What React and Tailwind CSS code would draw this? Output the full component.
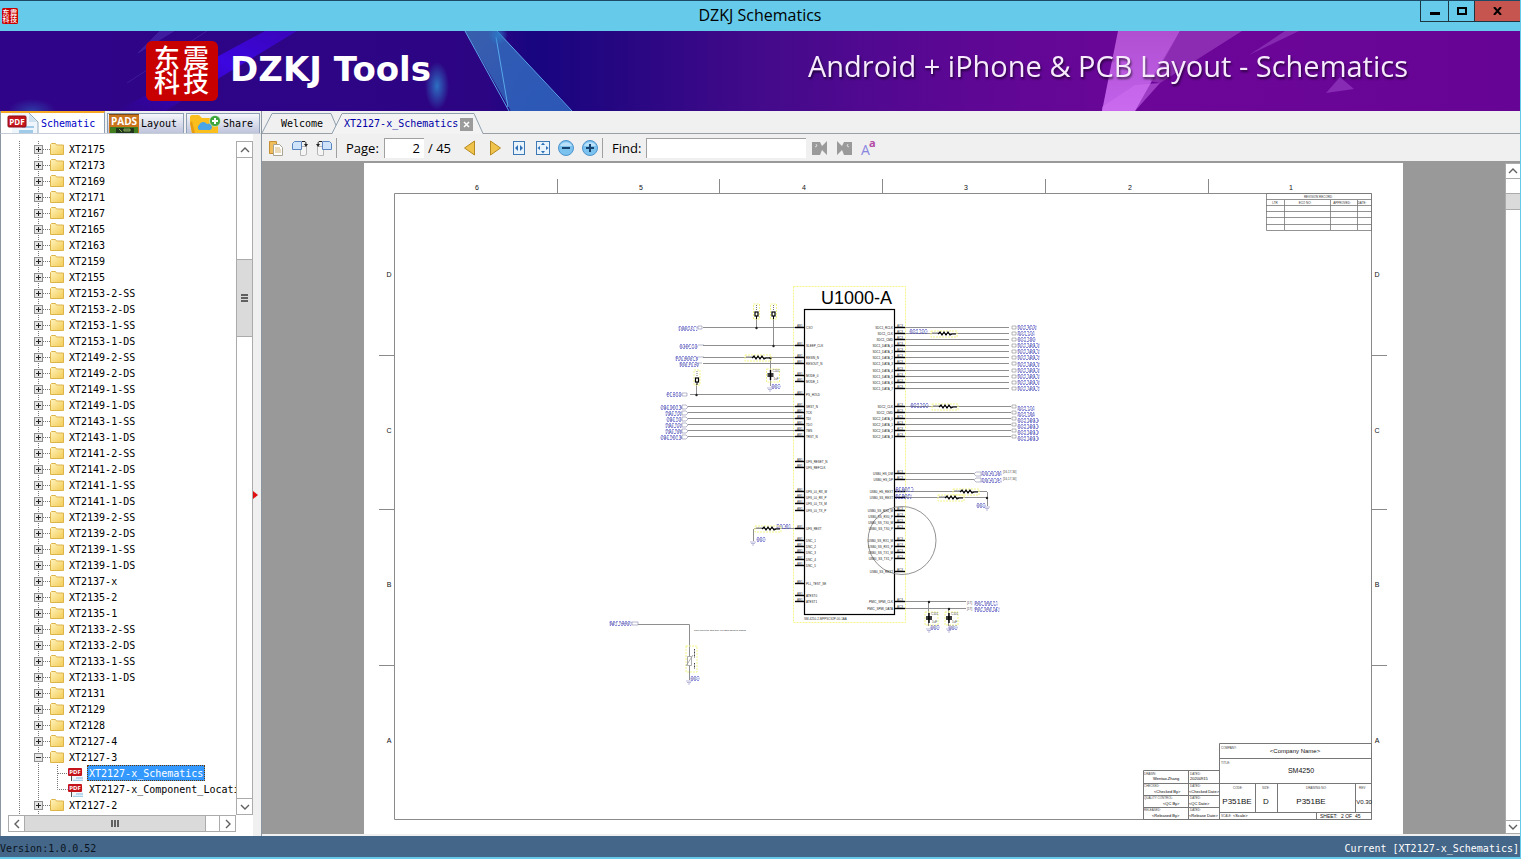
import React, { useState } from 'react';

const FOLDERS = [
  'XT2175', 'XT2173', 'XT2169', 'XT2171', 'XT2167', 'XT2165', 'XT2163', 'XT2159', 'XT2155',
  'XT2153-2-SS', 'XT2153-2-DS', 'XT2153-1-SS', 'XT2153-1-DS',
  'XT2149-2-SS', 'XT2149-2-DS', 'XT2149-1-SS', 'XT2149-1-DS',
  'XT2143-1-SS', 'XT2143-1-DS', 'XT2141-2-SS', 'XT2141-2-DS', 'XT2141-1-SS', 'XT2141-1-DS',
  'XT2139-2-SS', 'XT2139-2-DS', 'XT2139-1-SS', 'XT2139-1-DS',
  'XT2137-x', 'XT2135-2', 'XT2135-1', 'XT2133-2-SS', 'XT2133-2-DS', 'XT2133-1-SS', 'XT2133-1-DS',
  'XT2131', 'XT2129', 'XT2128', 'XT2127-4', 'XT2127-3', 'XT2127-2', '',
];

const FILES = { 'XT2127-3': ['XT2127-x_Schematics', 'XT2127-x_Component_Location'] };

const Seal = ({ width, className }) => (
  <svg viewBox={`0 0 ${width} 60`} className={className} aria-hidden="true">
    <rect width={width} height="60" rx="6" fill="#c90000" />
    <g fill="#fff" fontSize="26" fontWeight="500" textAnchor="middle" fontFamily="'Noto Sans CJK SC', sans-serif">
      <text x={width / 2 - 15} y="27">东</text>
      <text x={width / 2 + 14} y="27">震</text>
      <text x={width / 2 - 15} y="51">科</text>
      <text x={width / 2 + 14} y="51">技</text>
    </g>
  </svg>
);

const PdfIcon = ({ className }) => (
  <svg viewBox="0 0 32 20" className={className} aria-hidden="true">
    <path d="M5 0h17l9 8v12H5z" fill="#eef5fb" />
    <path d="M22 0l9 9v11" fill="none" stroke="#93a9bd" />
    <path d="M22 1v8h8z" fill="#cfe0ee" />
    <path d="M15 13h12v2H15zM12 17h14v3H12z" fill="#9fcbe8" />
    <rect x="1" y="3" width="18" height="11" rx="1" fill="#c4141c" stroke="#8e0d12" />
    <text x="10" y="12" textAnchor="middle" fontSize="8" fontWeight="700" fill="#fff" fontFamily="'Open Sans', sans-serif">PDF</text>
  </svg>
);

const PadsIcon = () => (
  <svg viewBox="0 0 30 19" className="h-[19px] w-[30px]" aria-hidden="true">
    <rect width="30" height="19" fill="#c9731d" />
    <rect x="0" y="0" width="30" height="1" fill="#7c4a12" />
    <path d="M1 13h28v6H1z" fill="#3f7d1f" />
    <path d="M7 14h18v5H7z" fill="#20351c" />
    <path d="M10 15l3 3M15 15h6v2h-6z" stroke="#7fae4a" fill="#555" />
    <text x="15" y="11" textAnchor="middle" fontSize="10" fontWeight="700" fill="#fff" fontFamily="'Open Sans', sans-serif">PADS</text>
  </svg>
);

const CloudFolderIcon = () => (
  <svg viewBox="0 0 32 19" className="h-[19px] w-8" aria-hidden="true">
    <path d="M1 3q0-2 2-2h7l3 3h13q3 0 3 3v12H3L1 9z" fill="#fbbf1d" />
    <path d="M1 9l2 10h3L3 7z" fill="#e89c12" />
    <path d="M10 16a3.500 3.500 0 010-5 4.500 4.500 0 018-1 3 3 0 013 6z" fill="#4aa5e8" />
    <circle cx="26" cy="7" r="5.500" fill="#3da63c" stroke="#fff" strokeWidth="0.500" />
    <path d="M23 7h6M26 4v6" stroke="#fff" strokeWidth="2" />
  </svg>
);

const FolderIcon = () => (
  <svg viewBox="0 0 14 12" className="h-3 w-3.5 shrink-0" aria-hidden="true">
    <defs>
      <linearGradient id="folder" x1="0" y1="0" x2="1" y2="1">
        <stop offset="0" stopColor="#fff3bd" />
        <stop offset="1" stopColor="#f3cb55" />
      </linearGradient>
    </defs>
    <path d="M.5 11.500V1.500l1-1h4l1 1.500h7v9.500z" fill="url(#folder)" stroke="#dcb44a" />
  </svg>
);

const Expander = ({ open }) => (
  <svg viewBox="0 0 16 16" className="h-4 w-4 shrink-0" aria-hidden="true">
    <path d="M4.500 0v16M9 8.500h7" stroke="#777" strokeDasharray="1 1" />
    <rect x=".5" y="4.500" width="8" height="8" fill="#e6e6e6" stroke="#8f8f8f" />
    <path d={open ? 'M2 8.500h5' : 'M2 8.500h5M4.500 6v5'} stroke="#222" />
  </svg>
);

const Branch = ({ last }) => (
  <svg viewBox="0 0 34 16" className="h-4 w-[34px] shrink-0" aria-hidden="true">
    <path d={last ? 'M4.500 0v16M23.500 0v8.500h10' : 'M4.500 0v16M23.500 0v16M24 8.500h10'} fill="none" stroke="#777" strokeDasharray="1 1" />
  </svg>
);

const ScrollButton = ({ dir, className }) => {
  const paths = { up: 'M3 8l4-4 4 4', down: 'M3 4l4 4 4-4', left: 'M9 2L5 6l4 4', right: 'M5 2l4 4-4 4' };
  return (
    <button type="button" aria-label={`Scroll ${dir}`} className={`flex shrink-0 items-center justify-center border border-[#ababab] bg-white ${className}`}>
      <svg viewBox="0 0 14 12" className="h-3 w-3.5">
        <path d={paths[dir]} fill="none" stroke="#606060" strokeWidth="1.400" />
      </svg>
    </button>
  );
};

const TreeFolder = ({ name, selected, onSelect }) => {
  const files = FILES[name];
  return (
    <li>
      <button type="button" className="flex h-4 items-center pl-[26px] whitespace-nowrap">
        <Expander open={!!files} />
        <FolderIcon />
        <span className="pt-px pl-[5px]">{name}</span>
      </button>
      {files && (
        <ul>
          {files.map((file, i) => (
            <li key={file}>
              <button type="button" onClick={() => onSelect(file)} className="flex h-4 items-center pl-[26px] whitespace-nowrap">
                <Branch last={i === files.length - 1} />
                <svg viewBox="0 0 16 16" className="h-4 w-4 shrink-0" aria-hidden="true">
                  <path d="M3 3h8l4 4v9H3z" fill="#f2f7fb" />
                  <path d="M3.500 11v5" stroke="#555" />
                  <path d="M8 13h7M5 15.500h10" stroke="#a5cfe9" strokeWidth="1.500" />
                  <rect x="0" y="3" width="14" height="8" rx="1" fill="#c4141c" />
                  <text x="7" y="9" textAnchor="middle" fontSize="6" fontWeight="700" fill="#fff" fontFamily="'Open Sans', sans-serif">PDF</text>
                </svg>
                <span className={`ml-[3px] h-4 border px-px leading-[15px] ${selected === file ? 'border-dotted border-[#6b3a00] bg-[#3399ff] text-white' : 'border-transparent'}`}>
                  {file}
                </span>
              </button>
            </li>
          ))}
        </ul>
      )}
    </li>
  );
};

const Sidebar = ({ selected, onSelect }) => (
  <aside className="flex w-[262px] shrink-0 flex-col border-r border-[#8c96a0] bg-[#f0f0f0]">
    <div className="flex h-[22px] gap-0.5 border-l border-[#8c96a0]">
      <button type="button" className="flex w-[104px] shrink-0 items-center gap-0.5 border-t-2 border-r border-t-[#f5a623] border-r-[#8c9fb4] bg-white pl-1.5 text-[#0000c8]">
        <PdfIcon className="h-5 w-8" />
        <span className="pt-0.5">Schematic</span>
      </button>
      <button type="button" className="mt-0.5 flex w-[77px] shrink-0 items-end gap-0.5 border border-b-0 border-[#8c9fb4] bg-linear-to-b from-[#f6f7fb] to-[#bfc4dc] pl-px">
        <PadsIcon />
        <span className="leading-[18px]">Layout</span>
      </button>
      <button type="button" className="mt-0.5 flex w-[74px] shrink-0 items-end gap-0.5 border border-b-0 border-[#8c9fb4] bg-linear-to-b from-[#f6f7fb] to-[#bfc4dc] pl-0.5">
        <CloudFolderIcon />
        <span className="leading-[18px]">Share</span>
      </button>
    </div>
    <div className="flex min-h-0 flex-1 border-t border-l border-[#8c96a0] border-t-[#c5cdd8]">
      <div className="flex min-w-0 flex-1 flex-col bg-white pt-[7px] pb-1 pl-[7px]">
        <div className="flex min-h-0 flex-1">
          <nav className="min-w-0 flex-1 overflow-hidden bg-[linear-gradient(#777_50%,transparent_50%)] bg-size-[1px_2px] bg-position-[11px_0] bg-repeat-y" aria-label="Models">
            <ul>
              {FOLDERS.map((name) => (
                <TreeFolder key={name} name={name} selected={selected} onSelect={onSelect} />
              ))}
            </ul>
          </nav>
          <div className="flex w-[17px] shrink-0 flex-col border-x border-[#ababab] bg-white">
            <ScrollButton dir="up" className="-mx-px h-[17px]" />
            <div className="mt-[101px] flex h-[78px] flex-col items-center justify-center gap-px border-y border-[#ababab] bg-[#dadada]">
              <span className="h-0.5 w-[7px] bg-[#606060]" />
              <span className="h-0.5 w-[7px] bg-[#606060]" />
              <span className="h-0.5 w-[7px] bg-[#606060]" />
            </div>
            <ScrollButton dir="down" className="-mx-px mt-auto h-[17px]" />
          </div>
        </div>
        <div className="mr-[17px] flex h-[17px] shrink-0 border-y border-[#ababab] bg-white">
          <ScrollButton dir="left" className="-my-px w-[17px]" />
          <div className="flex w-[181px] items-center justify-center gap-px border-r border-[#ababab] bg-[#dadada]">
            <span className="h-[7px] w-0.5 bg-[#606060]" />
            <span className="h-[7px] w-0.5 bg-[#606060]" />
            <span className="h-[7px] w-0.5 bg-[#606060]" />
          </div>
          <ScrollButton dir="right" className="-my-px ml-auto w-[17px]" />
        </div>
      </div>
      <div className="flex w-2 shrink-0 items-center pt-5">
        <svg viewBox="0 0 7 8" className="h-2 w-[7px]" aria-hidden="true">
          <path d="M0 0l5 4-5 4z" fill="#e01010" />
        </svg>
      </div>
    </div>
  </aside>
);

const Divider = () => <span className="h-5 w-px shrink-0 bg-[#a0a0a0]" />;

const ToolButton = ({ label, children }) => (
  <button type="button" aria-label={label} className="h-4 w-4 shrink-0">
    <svg viewBox="0 0 16 16" className="h-4 w-4">{children}</svg>
  </button>
);

const Toolbar = () => {
  const [page, setPage] = useState('2');
  const [find, setFind] = useState('');

  return (
    <div className="flex h-[29px] shrink-0 items-center border-b-2 border-[#999] bg-[#f0f0f0] pl-1.5 font-['Open_Sans',sans-serif] text-[13px] text-black">
      <div className="flex items-center gap-2">
        <ToolButton label="Copy">
          <path d="M1.500 1.500h7v12h-7z" fill="#f0bd5c" stroke="#c58f35" />
          <path d="M5.500 4.500h6l3 3v8h-9z" fill="#fdfdfd" stroke="#a9a48f" />
          <path d="M7 8h5M7 10h6M7 12h6" stroke="#d7b877" />
        </ToolButton>
        <ToolButton label="Rotate right">
          <path d="M8.500 6.500h6v8l-2 1h-4z" fill="#f5f5f5" stroke="#b5b5b5" />
          <path d="M.5 3.500l2-2h7v8h-9z" fill="#cfe4fa" stroke="#5b86bd" />
          <path d="M10 1.500h3q1 0 1 3" fill="none" stroke="#222" />
          <path d="M12 4h4l-2 3z" fill="#222" />
        </ToolButton>
        <ToolButton label="Rotate left">
          <path d="M1.500 6.500h6v9h-4l-2-1z" fill="#f5f5f5" stroke="#b5b5b5" />
          <path d="M6.500 1.500h7l2 2v6h-9z" fill="#cfe4fa" stroke="#5b86bd" />
          <path d="M6 1.500H3Q2 1.500 2 5" fill="none" stroke="#222" />
          <path d="M0 4h4L2 7z" fill="#222" />
        </ToolButton>
      </div>
      <div className="flex items-center pl-1">
        <Divider />
        <label htmlFor="page" className="w-[38px] shrink-0 pl-[9px]">Page:</label>
        <input
          id="page"
          value={page}
          onChange={(e) => setPage(e.target.value)}
          className="ml-[9px] h-5 w-10 border-t border-l border-[#a0a0a0] bg-white pr-1 text-right"
        />
        <span className="w-[38px] shrink-0 pl-1">/ 45</span>
      </div>
      <div className="flex items-center gap-2">
        <ToolButton label="Previous page">
          <path d="M12.500 1v14L2.500 8z" fill="#f0c44c" stroke="#b68a22" />
        </ToolButton>
        <ToolButton label="Next page">
          <path d="M4.500 1v14l10-7z" fill="#f0c44c" stroke="#b68a22" />
        </ToolButton>
        <ToolButton label="Fit width">
          <rect x="3.500" y="1.500" width="11" height="13" fill="#e8f3fc" stroke="#3f79b5" />
          <path d="M8 5v6L5 8zM10 5v6l3-3z" fill="#2f6fb5" />
        </ToolButton>
        <ToolButton label="Fit page">
          <rect x="2.500" y="1.500" width="13" height="13" fill="#e8f3fc" stroke="#3f79b5" />
          <path d="M9 2.500l2 2.500H7zM9 13.500l2-2.500H7zM3.500 8L6 6v4zM14.500 8L12 6v4z" fill="#2f6fb5" />
        </ToolButton>
        <ToolButton label="Zoom out">
          <circle cx="8" cy="8" r="7.500" fill="#7cc2ef" stroke="#4f94cc" />
          <path d="M2 6a6.500 6 0 0112 0z" fill="#b9e0f8" />
          <path d="M4 8h8" stroke="#17436e" strokeWidth="2" />
        </ToolButton>
        <ToolButton label="Zoom in">
          <circle cx="8" cy="8" r="7.500" fill="#7cc2ef" stroke="#4f94cc" />
          <path d="M2 6a6.500 6 0 0112 0z" fill="#b9e0f8" />
          <path d="M4 8h8M8 4v8" stroke="#17436e" strokeWidth="2" />
        </ToolButton>
      </div>
      <div className="flex items-center gap-2 pl-1">
        <Divider />
        <label htmlFor="find" className="w-[27px] shrink-0 pl-px">Find:</label>
        <input
          id="find"
          value={find}
          onChange={(e) => setFind(e.target.value)}
          className="h-5 w-40 border-t border-l border-[#a0a0a0] bg-white px-1"
        />
        <div className="-ml-0.5 flex gap-2">
          <ToolButton label="Find previous">
            <path d="M0 2h8l2 4 5-5v14l-5-5-2 5H0z" fill="#9a9a9a" />
            <path d="M4 4l1 2-2 1" stroke="#ddd" fill="none" />
          </ToolButton>
          <ToolButton label="Find next">
            <path d="M16 2H8L6 6 1 1v14l5-5 2 5h8z" fill="#9a9a9a" />
            <path d="M12 4l-1 2 2 1" stroke="#ddd" fill="none" />
          </ToolButton>
          <ToolButton label="Match case">
            <text x="1" y="15" fontSize="14" fill="#8a86e0" fontFamily="'Open Sans', sans-serif">A</text>
            <text x="9" y="7" fontSize="11" fontWeight="700" fill="#b44aa6" fontFamily="'Open Sans', sans-serif">a</text>
          </ToolButton>
        </div>
      </div>
    </div>
  );
};

// pins on the left edge of the IC: [y, name, wire start]
const LEFT_PINS = [
  [328, 'CXO', 703], [346, 'SLEEP_CLK', 703], [358, 'RESIN_N', 703], [364, 'RESOUT_N', 703],
  [376, 'MODE_0'], [382, 'MODE_1'], [395, 'PS_HOLD', 690],
  [407, 'SRST_N', 688], [413, 'TCK', 688], [419, 'TDI', 688], [425, 'TDO', 688], [431, 'TMS', 688], [437, 'TRST_N', 688],
  [462, 'UFS_RESET_N'], [468, 'UFS_REFCLK'], [492, 'UFS_L0_RX_M'], [498, 'UFS_L0_RX_P'], [504, 'UFS_L0_TX_M'], [511, 'UFS_L0_TX_P'],
  [529, 'UFS_REXT', 754], [541, 'DNC_1'], [547, 'DNC_2'], [553, 'DNC_3'], [560, 'DNC_4'], [566, 'DNC_5'],
  [584, 'PLL_TEST_SE'], [596, 'ATEST0'], [602, 'ATEST1'],
];

const RIGHT_PINS = [
  [328, 'SDC1_RCLK', 1009], [334, 'SDC1_CLK', 1009], [340, 'SDC1_CMD', 1009], [346, 'SDC1_DATA_0', 1009],
  [352, 'SDC1_DATA_1', 1009], [358, 'SDC1_DATA_2', 1009], [364, 'SDC1_DATA_3', 1009], [371, 'SDC1_DATA_4', 1009],
  [377, 'SDC1_DATA_5', 1009], [383, 'SDC1_DATA_6', 1009], [389, 'SDC1_DATA_7', 1009],
  [407, 'SDC2_CLK', 1011], [413, 'SDC2_CMD', 1011], [419, 'SDC2_DATA_0', 1011], [425, 'SDC2_DATA_1', 1011],
  [431, 'SDC2_DATA_2', 1011], [437, 'SDC2_DATA_3', 1011],
  [474, 'USB0_HS_DM', 974], [480, 'USB0_HS_DP', 974], [492, 'USB0_HS_REXT', 987], [498, 'USB0_SS_REXT', 987],
  [511, 'USB0_SS_RX0_M'], [517, 'USB0_SS_RX0_P'], [523, 'USB0_SS_TX0_M'], [529, 'USB0_SS_TX0_P'],
  [541, 'USB0_SS_RX1_M'], [547, 'USB0_SS_RX1_P'], [553, 'USB0_SS_TX1_M'], [559, 'USB0_SS_TX1_P'],
  [572, 'USB0_SS_REXT'], [602, 'PMIC_SPMI_CLK', 966], [609, 'PMIC_SPMI_DATA', 966],
];

// net names: [x, y, box width, text]
const NETS = [
  [679, 330, 18, 'LNBBCLK1'], [680, 348, 17, 'SLEEP_CLK'], [676, 360, 21, 'PON_RESET_N'], [680, 366, 18, 'MSM_PS_HD'],
  [667, 396, 14, 'PS_HOLD'], [661, 409, 20, 'JTAG_SRST_N'], [666, 415, 15, 'JTAG_TCK'], [667, 421, 14, 'JTAG_TDI'],
  [666, 427, 15, 'JTAG_TDO'], [666, 433, 15, 'JTAG_TMS'], [661, 439, 20, 'JTAG_TRST_N'],
  [1018, 329, 18, 'SDC1_RCLK'], [1018, 335, 16, 'SDC1_CLK'], [1018, 341, 17, 'SDC1_CMD'], [1018, 347, 21, 'SDC1_DATA_0'],
  [1018, 353, 21, 'SDC1_DATA_1'], [1018, 359, 21, 'SDC1_DATA_2'], [1018, 366, 21, 'SDC1_DATA_3'], [1018, 372, 21, 'SDC1_DATA_4'],
  [1018, 378, 21, 'SDC1_DATA_5'], [1018, 384, 21, 'SDC1_DATA_6'], [1018, 390, 21, 'SDC1_DATA_7'],
  [1018, 410, 16, 'SDC2_CLK'], [1018, 416, 16, 'SDC2_CMD'], [1018, 422, 20, 'SDC2_DATA_0'], [1018, 428, 20, 'SDC2_DATA_1'],
  [1018, 434, 20, 'SDC2_DATA_2'], [1018, 440, 20, 'SDC2_DATA_3'],
  [910, 333, 17, 'SDC1_CLK'], [911, 407, 17, 'SDC2_CLK'],
  [982, 475, 19, 'USB_HS_DM'], [982, 482, 19, 'USB_HS_DP'], [896, 491, 17, 'HS_REXT'], [896, 498, 15, 'SS_REXT'],
  [977, 507, 8, 'GND'], [772, 388, 8, 'GND'], [757, 541, 8, 'GND'], [691, 680, 8, 'GND'],
  [931, 629, 8, 'GND'], [949, 629, 8, 'GND'], [777, 528, 13, 'UFS_RX'],
  [975, 605, 22, 'PMIC_SPMI_C'], [975, 611, 24, 'PMIC_SPMI_DA'], [610, 625, 21, 'BATT_THERM'],
];

const Resistor = ({ x, y }) => (
  <g>
    <rect x={x - 10} y={y - 3} width="26" height="6" fill="none" stroke="#f4f48a" strokeDasharray="2 1" />
    <path d={`M${x - 3} ${y}l2-2 2 3 2-3 2 3 2-3 2 3 2-1h4`} fill="none" stroke="#000" strokeWidth="1.200" />
    <text x={x - 9} y={y - 1} fontSize="2" fill="#444">R1001</text>
  </g>
);

const Capacitor = ({ x, y }) => (
  <g>
    <rect x={x - 4} y={y - 6} width="13" height="13" fill="none" stroke="#f4f48a" strokeDasharray="2 1" />
    <path d={`M${x - 3} ${y - 1}h6M${x - 3} ${y + 1}h6M${x} ${y - 5}v10`} stroke="#000" strokeWidth="1.400" />
    <text x={x + 2} y={y - 3} fontSize="3" fill="#444">C101</text>
    <text x={x + 3} y={y + 5} fontSize="3" fill="#444">1uF</text>
  </g>
);

const TestPoint = ({ x, y }) => (
  <g>
    <rect x={x - 3} y={y - 10} width="6" height="15" fill="none" stroke="#f4f48a" strokeDasharray="2 1" />
    <path d={`M${x} ${y - 9}v6`} stroke="#777" strokeDasharray="1 1" />
    <rect x={x - 1.500} y={y - 2} width="3" height="4" fill="#fff" stroke="#000" strokeWidth="1.200" />
    <path d={`M${x} ${y + 2}v3`} stroke="#000" />
  </g>
);

const Ground = ({ x, y }) => (
  <path d={`M${x - 3} ${y}h6M${x - 2} ${y + 1.500}h4M${x - 1} ${y + 3}h2`} stroke="#8c8cc4" strokeWidth="0.600" />
);

const SchematicPage = () => (
  <svg viewBox="364 163 1039 671" className="h-full w-[1039px] shrink-0 bg-white" fontFamily="'Liberation Sans', sans-serif" role="img" aria-label="Schematic page 2">
    {/* Sheet frame */}
    <g fill="none" stroke="#8a8a8a">
      <path d="M394.500 193.500h977v626h-977z" />
      <path d="M557.500 179v14M719.500 179v14M882.500 179v14M1045.500 179v14M1208.500 179v14" />
      <path d="M379 355.500h15M379 509.500h15M379 665.500h15M1372 355.500h15M1372 509.500h15M1372 665.500h15" />
    </g>
    <g fontSize="7" fill="#111" textAnchor="middle">
      {[477, 641, 804, 966, 1130, 1291].map((x, i) => (
        <text key={x} x={x} y="190">{6 - i}</text>
      ))}
      {[[277, 'D'], [433, 'C'], [587, 'B'], [743, 'A']].map(([y, letter]) => (
        <React.Fragment key={letter}>
          <text x="389" y={y}>{letter}</text>
          <text x="1377" y={y}>{letter}</text>
        </React.Fragment>
      ))}
    </g>

    {/* Revision record */}
    <path d="M1266.500 193.500h105v37h-105zM1266 199.500h106M1266 205.500h106M1266 211.500h106M1266 217.500h106M1266 224.500h106M1284.500 200v30M1330.500 200v30M1357.500 200v30" fill="none" stroke="#777" strokeWidth="0.800" />
    <g fontSize="3" fill="#333" textAnchor="middle">
      <text x="1318" y="198">REVISION RECORD</text>
      <text x="1275" y="204">LTR</text>
      <text x="1305" y="204">ECO NO:</text>
      <text x="1342" y="204">APPROVED:</text>
      <text x="1362" y="204">DATE:</text>
    </g>

    {/* IC body */}
    <rect x="793.500" y="286.500" width="112" height="336" fill="none" stroke="#f4f48a" strokeDasharray="2 1" />
    <text x="821" y="304" fontSize="18" fill="#000">U1000-A</text>
    <rect x="804.500" y="309.500" width="90" height="305" fill="none" stroke="#000" strokeWidth="1.200" />
    <text x="804" y="620" fontSize="3" fill="#333">SM-4250-2-MPPSC92P-00-1AA</text>
    <circle cx="902" cy="540.500" r="34" fill="none" stroke="#777" strokeWidth="0.800" />

    {LEFT_PINS.map(([y, name, from]) => (
      <g key={y}>
        {from && <path d={`M${from} ${y - 0.5}H795`} stroke="#8f8f8f" />}
        <path d={`M795 ${y - 0.5}h9`} stroke="#000" strokeWidth="1.400" />
        <text x="797" y={y - 1} fontSize="3" fill="#333">AB1</text>
        <text x="806" y={y + 1} fontSize="3" fill="#222">{name}</text>
      </g>
    ))}
    {RIGHT_PINS.map(([y, name, to]) => (
      <g key={y}>
        {to && <path d={`M905 ${y - 0.5}H${to}`} stroke="#8f8f8f" />}
        <path d={`M895 ${y - 0.5}h10`} stroke="#000" strokeWidth="1.400" />
        {to !== 987 && <text x="897" y={y - 1} fontSize="3" fill="#333">AC3</text>}
        <text x="893" y={y + 1} fontSize="3" fill="#222" textAnchor="end">{name}</text>
        {to > 1000 && <path d={`M1012 ${y - 2}h4v3h-4z`} fill="none" stroke="#888" strokeWidth="0.600" />}
      </g>
    ))}
    {NETS.map(([x, y, width, text]) => (
      <g key={`${x}-${y}`}>
        <rect x={x} y={y - 3.5} width={width} height="4" fill="none" stroke="#4a4ac8" strokeWidth="0.600" strokeDasharray="2 1" />
        <text x={x} y={y - 0.5} fontSize="3" fill="#2c2c9e">{text}</text>
      </g>
    ))}

    {/* Off-sheet connectors */}
    <g fill="none" stroke="#8888a8" strokeWidth="0.600">
      {[407, 413, 419, 425, 431, 437].map((y) => (
        <path key={y} d={`M682 ${y - 2}h4l2 2-2 2h-4z`} />
      ))}
      <path d="M698 326h4v3h-4zM698 345h6M698 357h6M698 363h4M682 393h5v3h-5zM632 622h6v3h-6zM974 474l2-2h5v4h-5zM974 480l2-2h5v4h-5z" />
    </g>
    <g fontSize="3" fill="#444">
      <text x="1003" y="473">[16,17,34]</text>
      <text x="1003" y="480">[16,17,34]</text>
      <text x="967" y="604">[17]</text>
      <text x="967" y="610">[17]</text>
    </g>
    <text x="694" y="631" fontSize="2" fill="#222">Place near to the CON area, if no taboo should be drawing</text>

    {/* Discrete parts */}
    <g fill="none" stroke="#8f8f8f">
      <path d="M756.500 318v10M773.500 318v28M696.500 384v11M770.500 358v28M753.500 529v12M638 624.500h51.500V680M987.500 492v14M928.500 602v24M948.500 609v17" />
    </g>
    <g fill="#222">
      <circle cx="756.500" cy="328" r="1.200" />
      <circle cx="773.500" cy="346" r="1.200" />
      <circle cx="696.500" cy="395" r="1.200" />
      <circle cx="770.500" cy="358" r="1.200" />
      <circle cx="987" cy="498" r="1.200" />
      <circle cx="929" cy="602" r="1.200" />
      <circle cx="949" cy="609" r="1.200" />
    </g>
    <TestPoint x={756.5} y={314} />
    <TestPoint x={773.5} y={314} />
    <TestPoint x={697} y={380} />
    <Resistor x={755} y={358} />
    <Resistor x={941} y={334} />
    <Resistor x={942} y={407} />
    <Resistor x={963} y={492} />
    <Resistor x={948} y={498} />
    <Resistor x={765} y={529} />
    <Capacitor x={770.5} y={375} />
    <Capacitor x={929} y={618} />
    <Capacitor x={949} y={618} />
    <Ground x={770} y={388} />
    <Ground x={753} y={542} />
    <Ground x={987} y={507} />
    <Ground x={929} y={629} />
    <Ground x={949} y={629} />
    <Ground x={689} y={681} />
    <rect x="686" y="646" width="11" height="26" fill="none" stroke="#f4f48a" strokeDasharray="2 1" />
    <path d="M687.500 656.500h4v9h-4zM686 666l7-11" fill="#fff" stroke="#999" strokeWidth="0.800" />
    <path d="M694.500 649v9M694.500 663v6" stroke="#444" strokeDasharray="1 0.500" />

    {/* Title block */}
    <g fill="none" stroke="#777">
      <path d="M1219.500 743.500h152v76h-152zM1219 758.500h153M1219 783.500h153M1219 812.500h153M1255.500 784v28M1277.500 784v28M1355.500 784v28M1316.500 812v7" />
      <path d="M1143.500 770.500h76v49h-76zM1143 783.500h76M1143 795.500h76M1143 807.500h76M1188.500 770v49" />
    </g>
    <g fontSize="3" fill="#444">
      <text x="1221" y="749">COMPANY:</text>
      <text x="1221" y="764">TITLE:</text>
      <text x="1144" y="775">DRAWN:</text>
      <text x="1190" y="775">DATED:</text>
      <text x="1144" y="787">CHECKED:</text>
      <text x="1190" y="787">DATED:</text>
      <text x="1144" y="799">QUALITY CONTROL:</text>
      <text x="1190" y="799">DATED:</text>
      <text x="1144" y="811">RELEASED:</text>
      <text x="1190" y="811">DATED:</text>
      <text x="1233" y="789">CODE:</text>
      <text x="1262" y="789">SIZE:</text>
      <text x="1306" y="789">DRAWING NO:</text>
      <text x="1359" y="789">REV:</text>
      <text x="1221" y="817">SCALE:</text>
    </g>
    <g fontSize="4" fill="#000">
      <text x="1153" y="780">Wentao.Zhang</text>
      <text x="1190" y="780">20200915</text>
      <text x="1154" y="793">&lt;Checked By&gt;</text>
      <text x="1189" y="793">&lt;Checked Date&gt;</text>
      <text x="1163" y="805">&lt;QC By&gt;</text>
      <text x="1189" y="805">&lt;QC Date&gt;</text>
      <text x="1152" y="817">&lt;Released By&gt;</text>
      <text x="1189" y="817">&lt;Release Date&gt;</text>
      <text x="1233" y="817">&lt;Scale&gt;</text>
    </g>
    <g fontSize="5" fill="#111">
      <text x="1320" y="818">SHEET:</text>
      <text x="1341" y="818">2 OF</text>
      <text x="1355" y="818">45</text>
    </g>
    <g fill="#111" textAnchor="middle">
      <text x="1295" y="753" fontSize="6">&lt;Company Name&gt;</text>
      <text x="1301" y="773" fontSize="7">SM4250</text>
      <text x="1237" y="804" fontSize="8">P351BE</text>
      <text x="1266" y="804" fontSize="8">D</text>
      <text x="1311" y="804" fontSize="8">P351BE</text>
      <text x="1364" y="804" fontSize="6">V0.30</text>
    </g>
  </svg>
);

const Viewer = () => (
  <main className="flex min-w-0 flex-1 flex-col bg-[#f0f0f0]">
    <div className="relative flex h-[23px] shrink-0 border-b border-[#999fa5]">
      <svg viewBox="0 0 222 23" className="absolute top-0 left-0 h-[23px] w-[222px]" aria-hidden="true">
        <path d="M0 22L10 2.500h59l8 19" fill="none" stroke="#8fa0ae" />
        <path d="M70 23L80 2.500h132l9 20.500z" fill="#f3f3f3" />
        <path d="M70 22.500L80 2.500h132l9 20" fill="none" stroke="#8fa0ae" />
      </svg>
      <button type="button" className="relative w-[76px] pt-1 pl-1">Welcome</button>
      <div className="relative flex items-center pt-1 pl-1.5">
        <button type="button" className="text-[#0000a8]">XT2127-x_Schematics</button>
        <button type="button" aria-label="Close tab" className="ml-0.5 flex h-[13px] w-[13px] items-center justify-center bg-[#9b9b9b]">
          <svg viewBox="0 0 7 7" className="h-[7px] w-[7px]">
            <path d="M1 1l5 5M6 1L1 6" stroke="#fff" strokeWidth="1.500" />
          </svg>
        </button>
      </div>
    </div>
    <Toolbar />
    <div className="mb-0.5 flex min-h-0 flex-1">
      <div className="flex min-w-0 flex-1 justify-center overflow-hidden bg-[#999]">
        <SchematicPage />
      </div>
      <div className="flex w-[15px] shrink-0 flex-col border-l border-[#ababab] bg-white">
        <ScrollButton dir="up" className="-mr-px -ml-px h-4" />
        <div className="mt-3.5 h-[17px] border-y border-[#ababab] bg-[#dadada]" />
        <ScrollButton dir="down" className="-mr-px -ml-px mt-auto h-3.5" />
      </div>
    </div>
  </main>
);

const Banner = () => (
  <header className="relative flex h-20 shrink-0 items-center bg-[#300489]">
    <svg viewBox="0 0 1520 80" preserveAspectRatio="none" className="absolute inset-0 h-full w-full" aria-hidden="true">
      <defs>
        <linearGradient id="sky">
          <stop offset="0" stopColor="#300489" />
          <stop offset="0.320" stopColor="#2c0583" />
          <stop offset="0.350" stopColor="#180580" />
          <stop offset="0.400" stopColor="#240681" />
          <stop offset="0.500" stopColor="#430a8b" />
          <stop offset="0.640" stopColor="#5e0795" />
          <stop offset="0.760" stopColor="#6c0698" />
          <stop offset="1" stopColor="#660496" />
        </linearGradient>
        <linearGradient id="beam" x1="0" y1="1" x2="1" y2="0">
          <stop offset="0" stopColor="#3a00d8" stopOpacity="0" />
          <stop offset="0.600" stopColor="#3c06e0" />
          <stop offset="1" stopColor="#3a04b8" />
        </linearGradient>
        <linearGradient id="shard" x1="0" y1="0" x2="1" y2="1">
          <stop offset="0" stopColor="#3a6fb4" />
          <stop offset="1" stopColor="#2c5fc0" />
        </linearGradient>
        <linearGradient id="pink" x1="0" y1="0" x2="0" y2="1">
          <stop offset="0" stopColor="#b04fd0" />
          <stop offset="1" stopColor="#c262ec" />
        </linearGradient>
        <radialGradient id="glow">
          <stop offset="0" stopColor="#2d7cc8" stopOpacity="0.900" />
          <stop offset="1" stopColor="#2d7cc8" stopOpacity="0" />
        </radialGradient>
      </defs>
      <rect width="1520" height="80" fill="url(#sky)" />
      <path d="M265 0h32L165 80h-48z" fill="url(#beam)" />
      <path d="M160 0h14l-36 22zM207 0L127 52" fill="#3f1ba0" stroke="#43209f" strokeWidth="0.800" />
      <ellipse cx="437" cy="55" rx="12" ry="24" fill="url(#glow)" />
      <ellipse cx="32" cy="80" rx="24" ry="12" fill="url(#glow)" opacity="0.500" />
      <path d="M465 0h32l74 80h-60z" fill="url(#shard)" opacity="0.850" />
      <path d="M497 0l-3 8 16 72h62z" fill="#2f5cb8" opacity="0.600" />
      <path d="M465 0l44 80M497 0l75 80M496 6l12 70" fill="none" stroke="#5aa8e8" />
      <circle cx="498" cy="4" r="10" fill="url(#glow)" />
      <path d="M1118 0h62l-45 80h-33z" fill="url(#pink)" />
      <path d="M1180 0h62l-82 52-10-2z" fill="#9a3dbd" opacity="0.700" />
      <path d="M1285 0h14l-50 24z" fill="#8529b0" />
      <path d="M1102 76l33-22 25-2-25 28h-33z" fill="#cf72f2" opacity="0.500" />
      <path d="M1340 46l14 12-28 4z" fill="#872bb4" />
    </svg>
    <Seal width={72} className="relative ml-[146px] h-[60px] w-[72px] shrink-0" />
    <h1 className="relative ml-3 pb-1 font-['DejaVu_Sans',sans-serif] text-[34px] leading-10 font-bold whitespace-nowrap text-white">DZKJ Tools</h1>
    <p className="relative mr-28 ml-auto pb-2.5 font-['Open_Sans',sans-serif] text-[29px] leading-9 whitespace-nowrap text-[#f6eafc] drop-shadow-[1px_2px_1px_rgba(0,0,0,0.6)]">
      Android + iPhone &amp; PCB Layout - Schematics
    </p>
  </header>
);

export default function App() {
  const [selected, setSelected] = useState('XT2127-x_Schematics');

  return (
    <div className="flex h-screen flex-col overflow-hidden border-r border-b-2 border-[#66cbea] bg-[#f0f0f0] font-['DejaVu_Sans_Mono',monospace] text-[10px] leading-4 text-black">
      {/* Title bar */}
      <div className="flex h-[31px] shrink-0 border-t border-[#1c4a66] bg-[#66cbea]">
        <div className="flex w-[100px] items-center pl-0.5">
          <Seal width={60} className="h-4 w-4" />
        </div>
        <div className="flex-1 text-center font-['Open_Sans',sans-serif] text-[16px] leading-[29px]">DZKJ Schematics</div>
        <div className="flex h-[21px] w-[100px] border-b border-l border-[#1d3540]">
          <button type="button" aria-label="Minimize" className="flex w-7 items-center justify-center border-r border-[#1d3540] pt-1">
            <span className="h-[3px] w-2.5 bg-black" />
          </button>
          <button type="button" aria-label="Maximize" className="flex w-[26px] items-center justify-center border-r border-[#1d3540]">
            <span className="h-2 w-2.5 border-2 border-black" />
          </button>
          <button type="button" aria-label="Close" className="flex flex-1 items-center justify-center bg-[#c6554f]">
            <svg viewBox="0 0 9 8" className="h-2 w-[9px]">
              <path d="M1 0l7 8M8 0L1 8" stroke="#000" strokeWidth="2" />
            </svg>
          </button>
        </div>
      </div>

      <Banner />

      <div className="flex min-h-0 flex-1">
        <Sidebar selected={selected} onSelect={setSelected} />
        <Viewer />
      </div>

      <footer className="flex h-[21px] shrink-0 items-end justify-between bg-[#446688]">
        <span className="text-[#0a141e]">Version:1.0.0.52</span>
        <span className="pr-px text-white">Current [{selected}]</span>
      </footer>
    </div>
  );
}
